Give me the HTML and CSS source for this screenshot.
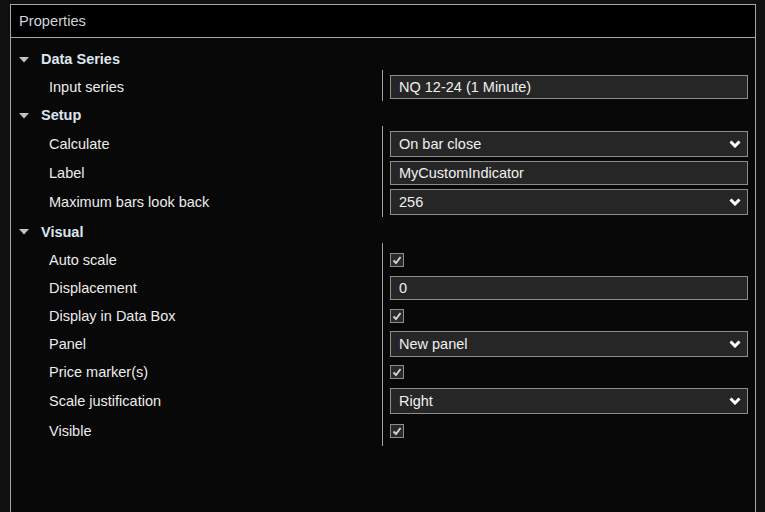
FILE: index.html
```html
<!DOCTYPE html>
<html>
<head>
<meta charset="utf-8">
<link rel="stylesheet" href="styles.css">
</head>
<body>
<div class="panel">
  <div class="header">Properties</div>
  <div class="list">
    <div class="cat"><svg class="tri" viewBox="0 0 10 6" width="10" height="6"><polygon points="0,0 10,0 5,5.5" fill="#c4c4c4"/></svg><span>Data Series</span></div>
    <div class="group">
      <div class="row"><div class="label">Input series</div><div class="value"><div class="field">NQ 12-24 (1 Minute)</div></div></div>
    </div>

    <div class="cat"><svg class="tri" viewBox="0 0 10 6" width="10" height="6"><polygon points="0,0 10,0 5,5.5" fill="#c4c4c4"/></svg><span>Setup</span></div>
    <div class="group">
      <div class="row tall"><div class="label">Calculate</div><div class="value"><div class="field select">On bar close<svg class="chev" viewBox="0 0 12 8" width="12" height="8"><polyline points="1.5,1.5 6,6 10.5,1.5" fill="none" stroke="#ffffff" stroke-width="3"/></svg></div></div></div>
      <div class="row tall"><div class="label">Label</div><div class="value"><div class="field">MyCustomIndicator</div></div></div>
      <div class="row taller"><div class="label">Maximum bars look back</div><div class="value"><div class="field select">256<svg class="chev" viewBox="0 0 12 8" width="12" height="8"><polyline points="1.5,1.5 6,6 10.5,1.5" fill="none" stroke="#ffffff" stroke-width="3"/></svg></div></div></div>
    </div>

    <div class="cat tall"><svg class="tri" viewBox="0 0 10 6" width="10" height="6"><polygon points="0,0 10,0 5,5.5" fill="#c4c4c4"/></svg><span>Visual</span></div>
    <div class="group">
      <div class="row"><div class="label">Auto scale</div><div class="value"><div class="check"><svg viewBox="0 0 12 12" width="12" height="12"><polyline points="2.5,6.5 5,9 9.5,3" fill="none" stroke="#d4d4d4" stroke-width="2"/></svg></div></div></div>
      <div class="row"><div class="label">Displacement</div><div class="value"><div class="field">0</div></div></div>
      <div class="row"><div class="label">Display in Data Box</div><div class="value"><div class="check"><svg viewBox="0 0 12 12" width="12" height="12"><polyline points="2.5,6.5 5,9 9.5,3" fill="none" stroke="#d4d4d4" stroke-width="2"/></svg></div></div></div>
      <div class="row"><div class="label">Panel</div><div class="value"><div class="field select">New panel<svg class="chev" viewBox="0 0 12 8" width="12" height="8"><polyline points="1.5,1.5 6,6 10.5,1.5" fill="none" stroke="#ffffff" stroke-width="3"/></svg></div></div></div>
      <div class="row"><div class="label">Price marker(s)</div><div class="value"><div class="check"><svg viewBox="0 0 12 12" width="12" height="12"><polyline points="2.5,6.5 5,9 9.5,3" fill="none" stroke="#d4d4d4" stroke-width="2"/></svg></div></div></div>
      <div class="row taller"><div class="label">Scale justification</div><div class="value"><div class="field select">Right<svg class="chev" viewBox="0 0 12 8" width="12" height="8"><polyline points="1.5,1.5 6,6 10.5,1.5" fill="none" stroke="#ffffff" stroke-width="3"/></svg></div></div></div>
      <div class="row taller"><div class="label">Visible</div><div class="value"><div class="check"><svg viewBox="0 0 12 12" width="12" height="12"><polyline points="2.5,6.5 5,9 9.5,3" fill="none" stroke="#d4d4d4" stroke-width="2"/></svg></div></div></div>
    </div>
  </div>
</div>
</body>
</html>
```
FILE: styles.css
```css
html, body {
  margin: 0;
  padding: 0;
  height: 100%;
  overflow: hidden;
  background: #101010;
}
body {
  font-family: "Liberation Sans", Arial, sans-serif;
  font-size: 14.5px;
  color: #ececec;
}
.panel {
  margin: 4px 9px 0 10px;
  height: 508px;
  border: 1px solid #a6a6a6;
  border-bottom: none;
  background: #080808;
  box-sizing: border-box;
}
.header {
  height: 32px;
  background: #000;
  border-bottom: 1px solid #a6a6a6;
  display: flex;
  align-items: center;
  padding-left: 8px;
  font-size: 14.7px;
  color: #cfd4da;
}
.list {
  padding-top: 7px;
  padding-right: 7px;
}
.cat {
  height: 28px;
  display: flex;
  align-items: center;
  padding-left: 8px;
  font-weight: bold;
  color: #dde5ee;
}
.cat.tall {
  height: 29px;
}
.tri {
  margin-right: 12px;
  margin-top: 1px;
}
.group {
  margin-top: -3px;
  padding-top: 3px;
  background: linear-gradient(#a0a0a0, #a0a0a0) 371px 0 / 1px 100% no-repeat;
}
.row {
  height: 28px;
  display: grid;
  grid-template-columns: 372px 1fr;
  align-items: center;
}
.row.tall {
  height: 29px;
}
.row.taller {
  height: 30px;
}
.label {
  padding-left: 38px;
  white-space: nowrap;
}
.value {
  padding-left: 7px;
  display: flex;
  align-items: center;
}
.field {
  flex: 1;
  height: 24px;
  box-sizing: border-box;
  border: 1px solid #8c8c8c;
  background: #262626;
  color: #f0f0f0;
  display: flex;
  align-items: center;
  padding-left: 8px;
  padding-right: 6px;
}
.field.select {
  height: 26px;
  justify-content: space-between;
}
.chev {
  display: block;
}
.check {
  width: 14px;
  height: 14px;
  box-sizing: border-box;
  border: 1px solid #8c8c8c;
  background: #2a2a2a;
  display: flex;
  align-items: center;
  justify-content: center;
}
.check svg {
  display: block;
}
```
